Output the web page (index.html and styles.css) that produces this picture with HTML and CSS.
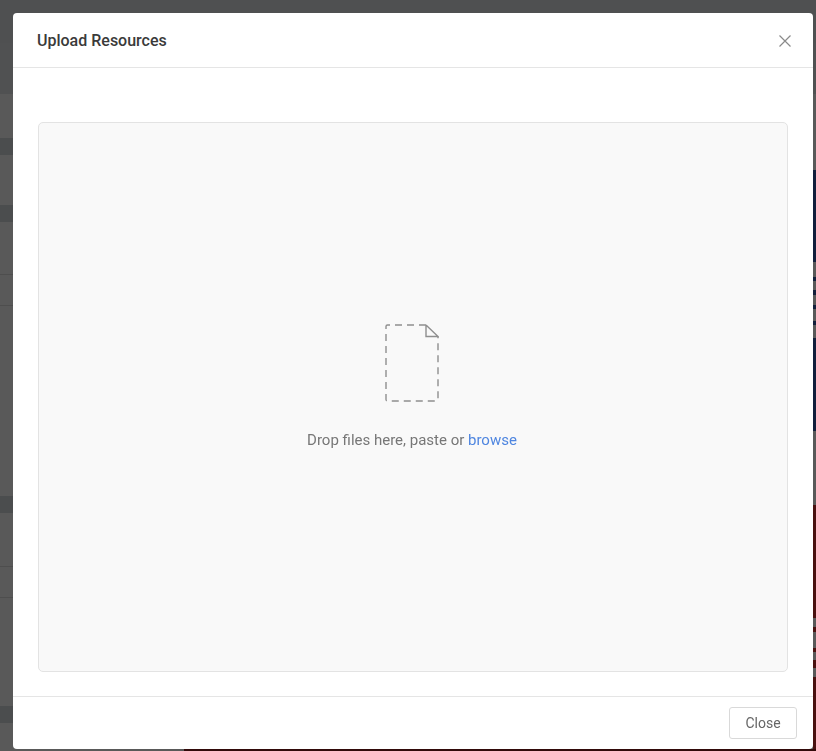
FILE: index.html
```html
<!DOCTYPE html>
<html>
<head>
  <meta charset="utf-8">
  <title>Upload Resources</title>
  <link rel="stylesheet" href="styles.css">
</head>
<body>
  <div class="page">
    <div class="page-top"></div>
    <div class="page-body">
      <div class="page-list">
        <div class="band band-1"></div>
        <div class="band band-2"></div>
        <div class="rule rule-1"></div>
        <div class="rule rule-2"></div>
        <div class="band band-3"></div>
        <div class="rule rule-3"></div>
        <div class="rule rule-4"></div>
        <div class="band band-4"></div>
      </div>
      <div class="page-main">
        <div class="page-strip"></div>
        <div class="page-foot"></div>
      </div>
    </div>
  </div>

  <div class="overlay">
    <div class="modal">
      <div class="modal-header">
        <h4 class="modal-title">Upload Resources</h4>
        <button class="modal-x" aria-label="Close">
          <svg width="14" height="14" viewBox="0 0 14 14">
            <path d="M1.5 1.5l11 11M12.5 1.5l-11 11" fill="none" stroke="#8a8a8a" stroke-width="1.2"/>
          </svg>
        </button>
      </div>
      <div class="modal-body">
        <div class="dropzone">
          <svg class="file-icon" width="54" height="78" viewBox="0 0 54 78">
            <path d="M41 1H2.500A1.500 1.500 0 0 0 1 2.500V75.500A1.500 1.500 0 0 0 2.500 77H51.500A1.500 1.500 0 0 0 53 75.500V13" fill="none" stroke="#8f8f8f" stroke-width="1.4" stroke-dasharray="7 5"/>
            <path d="M41 1V12.500H53L41 1" fill="none" stroke="#8f8f8f" stroke-width="1.4"/>
          </svg>
          <p class="drop-text">Drop files here, paste or <a class="browse" href="#">browse</a></p>
        </div>
      </div>
      <div class="modal-footer">
        <button class="btn-close">Close</button>
      </div>
    </div>
  </div>
</body>
</html>
```

FILE: styles.css
```css
* {
  box-sizing: border-box;
}

body {
  margin: 0;
  overflow: hidden;
  font-family: Roboto, "Liberation Sans", sans-serif;
}

/* page behind the dialog, only its edges show */
.page {
  height: 751px;
  display: flex;
  flex-direction: column;
  background-color: #fff;
}

.page-top {
  height: 94px;
  flex: none;
  background-color: #e5e8ea;
  border-top: 43px solid #e3e5e7;
}

.page-body {
  flex: 1;
  display: flex;
}

.page-list {
  width: 184px;
  flex: none;
  padding-top: 44px;
}

.band {
  height: 17px;
  background-color: #d8dcde;
}

.rule {
  height: 1px;
  background-color: #e0e0e0;
}

.band-2 {
  margin-top: 50px;
}

.rule-1 {
  margin-top: 52px;
}

.rule-2 {
  margin-top: 30px;
}

.band-3 {
  margin-top: 190px;
}

.rule-3 {
  margin-top: 53px;
}

.rule-4 {
  margin-top: 30px;
}

.band-4 {
  margin-top: 108px;
}

.page-main {
  flex: 1;
  display: flex;
  flex-direction: column;
}

.page-strip {
  flex: 1;
  width: 3px;
  align-self: flex-end;
  background-image: linear-gradient(to bottom,
    #fff 76px,
    #365bab 76px, #365bab 168px,
    #fff 168px, #fff 183px,
    #365bab 183px, #365bab 187px,
    #fff 187px, #fff 196px,
    #365bab 196px, #365bab 201px,
    #fff 201px, #fff 211px,
    #365bab 211px, #365bab 215px,
    #fff 215px, #fff 227px,
    #365bab 227px, #365bab 231px,
    #fff 231px, #fff 244px,
    #365bab 244px, #365bab 337px,
    #fff 337px, #fff 411px,
    #d4332e 411px, #d4332e 524px,
    #fff 524px, #fff 533px,
    #d4332e 533px, #d4332e 538px,
    #fff 538px, #fff 554px,
    #d4332e 554px, #d4332e 558px,
    #fff 558px, #fff 566px,
    #d4332e 566px, #d4332e 574px,
    #fff 574px, #fff 583px,
    #d4332e 583px);
}

.page-foot {
  height: 2px;
  flex: none;
  background-color: #8f1f1f;
}

.overlay {
  position: fixed;
  top: 0;
  left: 0;
  right: 0;
  bottom: 0;
  padding: 13px 3px 2px 13px;
  background-color: rgba(0, 0, 0, 0.65);
}

.modal {
  height: 100%;
  display: flex;
  flex-direction: column;
  background-color: #fff;
  border-radius: 4px;
}

.modal-header {
  height: 55px;
  flex: none;
  display: flex;
  align-items: center;
  justify-content: space-between;
  padding: 0 21px 0 24px;
  border-bottom: 1px solid #e5e5e5;
}

.modal-title {
  margin: 0;
  font-size: 16px;
  font-weight: 500;
  color: #3a3a3a;
}

.modal-x {
  display: flex;
  margin-top: 2px;
  padding: 0;
  border: none;
  background: none;
}

.modal-body {
  flex: 1;
  display: flex;
  padding: 54px 25px 24px;
}

.dropzone {
  flex: 1;
  display: flex;
  flex-direction: column;
  align-items: center;
  justify-content: center;
  padding: 0 2px 22px 0;
  background-color: #f9f9f9;
  border: 1px solid #e3e3e3;
  border-radius: 5px;
}

.file-icon {
  display: block;
}

.drop-text {
  margin: 30px 0 0;
  font-size: 15px;
  line-height: 16px;
  color: #777;
}

.browse {
  color: #4f86e0;
  text-decoration: none;
}

.modal-footer {
  height: 53px;
  flex: none;
  display: flex;
  justify-content: flex-end;
  align-items: flex-start;
  padding: 10px 16px 0;
  border-top: 1px solid #e5e5e5;
}

.btn-close {
  width: 68px;
  height: 32px;
  font-family: Roboto, "Liberation Sans", sans-serif;
  font-size: 14px;
  color: #666;
  background-color: #fff;
  border: 1px solid #d9d9d9;
  border-radius: 3px;
}
```
